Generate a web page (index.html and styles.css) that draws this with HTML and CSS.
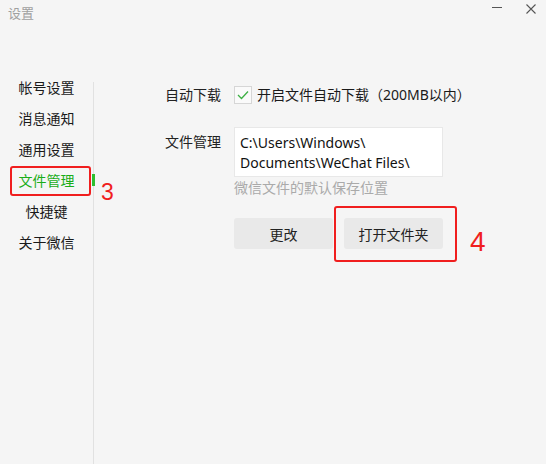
FILE: index.html
```html
<!DOCTYPE html>
<html lang="zh-CN">
<head>
  <meta charset="UTF-8">
  <title>设置</title>
  <link rel="stylesheet" href="styles.css">
</head>
<body>
  <div class="window">
    <header class="titlebar">
      <span class="title">设置</span>
      <div class="controls">
        <span class="btn-min"></span>
        <svg class="btn-close" width="10" height="10" viewBox="0 0 10 10">
          <path d="M0.5 0.5 L9.5 9.5 M9.5 0.5 L0.5 9.5" stroke="#555" stroke-width="1.1" fill="none"/>
        </svg>
      </div>
    </header>

    <div class="layout">
      <nav class="sidebar">
        <a class="nav-item">帐号设置</a>
        <a class="nav-item">消息通知</a>
        <a class="nav-item">通用设置</a>
        <a class="nav-item active">
          文件管理
          <span class="active-bar"></span>
          <span class="mark-box mark-nav"></span>
          <span class="mark-num num-3">3</span>
        </a>
        <a class="nav-item">快捷键</a>
        <a class="nav-item">关于微信</a>
      </nav>

      <main class="panel">
        <div class="row row-check">
          <span class="label">自动下载</span>
          <label class="check">
            <span class="check-box">
              <svg width="12" height="10" viewBox="0 0 12 10">
                <path d="M1 5 L4.5 8.5 L11 1.5" stroke="#3cb043" stroke-width="1.3" fill="none"/>
              </svg>
            </span>
            开启文件自动下载（200MB以内）
          </label>
        </div>

        <div class="row row-path">
          <span class="label label-top">文件管理</span>
          <div class="field">
            <div class="path-box">C:\Users\Windows\<br>Documents\WeChat Files\</div>
            <div class="hint">微信文件的默认保存位置</div>
            <div class="actions">
              <button class="btn">更改</button>
              <button class="btn btn-open">
                打开文件夹
                <span class="mark-box mark-btn"></span>
                <span class="mark-num num-4">4</span>
              </button>
            </div>
          </div>
        </div>
      </main>
    </div>
  </div>
</body>
</html>
```

FILE: styles.css
```css
:root {
  --bg: #f5f5f5;
  --line: #e1e1e1;
  --green: #1aad19;
  --red: #f01e1e;
  --text: #1a1a1a;
}
* {
  box-sizing: border-box;
  margin: 0; padding: 0;
}
html, body {
  width: 546px;
  height: 464px;
  overflow: hidden;
  background: var(--bg);
  font-family: "Noto Sans", "Noto Sans CJK SC", sans-serif;
  color: var(--text);
}
.window {
  height: 464px;
  display: flex;
  flex-direction: column;
}

/* title bar */
.titlebar {
  height: 82px;
  flex-shrink: 0;
  display: flex;
  justify-content: space-between;
  align-items: flex-start;
}
.title {
  font-size: 13px;
  line-height: 16px;
  color: #a0a0a0;
  margin: 5px 0 0 8px;
}
.controls {
  display: flex;
  align-items: flex-start;
  gap: 24px;
  margin: 4px 10px 0 0;
}
.btn-min {
  width: 10px;
  height: 1px;
  background: #555;
  margin-top: 3px;
}
.btn-close { display: block; }

/* body */
.layout {
  flex: 1;
  display: flex;
}
.sidebar {
  width: 94px;
  border-right: 1px solid var(--line);
  display: flex;
  flex-direction: column;
}
.nav-item {
  position: relative;
  display: block;
  height: 31px;
  line-height: 31px;
  font-size: 14px;
  text-align: center;
  color: var(--text);
}
.nav-item:first-child { margin-top: -10px; }
.nav-item.active { color: var(--green); }
.active-bar {
  position: absolute;
  left: 92px; top: 9px;
  width: 3px; height: 12px;
  background: #2fbf2f;
}

/* red annotations */
.mark-box {
  position: absolute;
  border: 2px solid var(--red);
  border-radius: 3px;
}
.mark-nav { left: 10px; top: 1px; width: 81px; height: 30px; }
.mark-btn { left: -10px; top: -12px; width: 123px; height: 56px; }
.mark-num {
  position: absolute;
  color: var(--red);
  font-family: "Liberation Sans", sans-serif;
  line-height: 1;
}
.num-3 { left: 101px; top: 16px; font-size: 23px; }
.num-4 { left: 126px; top: 10px; font-size: 28px; }

/* settings panel */
.panel {
  flex: 1;
  padding: 4px 0 0 71px;
  font-size: 14px;
}
.row {
  display: flex;
}
.label {
  width: 69px;
  flex-shrink: 0;
  line-height: 20px;
  color: #222;
}
.row-check {
  align-items: center;
  height: 18px;
}
.check {
  display: flex;
  align-items: center;
  gap: 5px;
  line-height: 20px;
}
.check-box {
  width: 18px; height: 18px;
  border: 1px solid #d6d6d6;
  background: #fafafa;
  display: flex;
  align-items: center;
  justify-content: center;
}
.row-path { margin-top: 23px; }
.label-top { margin-top: 5px; }
.path-box {
  width: 209px;
  height: 50px;
  padding: 5px 5px;
  background: #fff;
  border: 1px solid #e8e8e8;
  line-height: 20px;
  font-size: 14px;
  color: #111;
}
.hint {
  margin-top: 1px;
  line-height: 20px;
  color: #aaa;
}
.actions {
  display: flex;
  gap: 11px;
  margin-top: 20px;
}
.btn {
  position: relative;
  width: 99px;
  height: 31px;
  border: none;
  border-radius: 3px;
  background: #e9e9e9;
  font: inherit;
  font-size: 14px;
  color: #222;
}
```
